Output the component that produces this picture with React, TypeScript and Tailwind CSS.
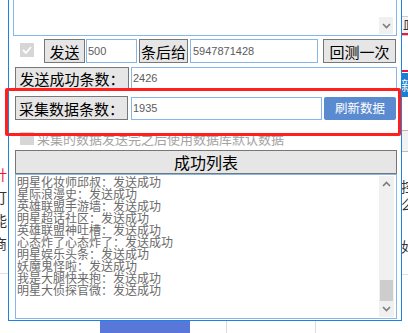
const cjk = "font-['Noto_Sans_CJK_SC','Noto_Sans_CJK_JP',sans-serif]";

const listItems = [
  "明星化妆师邱叔：发送成功",
  "星际浪漫史：发送成功",
  "英雄联盟手游墙：发送成功",
  "明星超话社区：发送成功",
  "英雄联盟神吐槽：发送成功",
  "心态炸了心态炸了：发送成功",
  "明星娱乐头条：发送成功",
  "妖魔鬼怪啦：发送成功",
  "我是大腿快来抱：发送成功",
  "明星大侦探官微：发送成功",
];

function Chevron({ up }: { up?: boolean }) {
  return (
    <svg width="9" height="6" viewBox="0 0 9 6">
      <polyline
        points={up ? "1,5 4.5,1.5 8,5" : "1,1 4.5,4.5 8,1"}
        fill="none"
        stroke="#7c7c7c"
        strokeWidth="1.6"
      />
    </svg>
  );
}

function WinButton({ label, className }: { label: string; className?: string }) {
  return (
    <div
      className={`flex items-center justify-center border border-[#777] bg-[#e6e6e6] text-[15px] leading-none text-black ${cjk} ${className ?? ""}`}
    >
      {label}
    </div>
  );
}

function Field({ value, className }: { value: string; className?: string }) {
  return (
    <div
      className={`flex items-center border border-[#86b7e8] bg-white pl-[1px] font-['Liberation_Sans',Arial,sans-serif] text-[11px] text-[#5c5c5c] ${className ?? ""}`}
    >
      {value}
    </div>
  );
}

export default function App() {
  return (
    <div className="relative h-[333px] w-[408px] overflow-hidden bg-white">
      {/* page behind the window */}
      <div className={`absolute left-[-7px] top-[167px] flex flex-col gap-[8px] text-[14px] leading-[15px] ${cjk}`}>
        <span className="text-[#e8193c]">针</span>
        <span className="text-[#333]">订</span>
        <span className="text-[#333]">能</span>
        <span className="text-[#333]">商</span>
      </div>
      <div className="absolute left-0 top-[273px] h-px w-[10px] bg-[#e2e2e2]" />
      <div className="absolute left-[401px] top-[16px] flex h-[20px] w-[12px] flex-col border border-[#ccc] bg-[#f4f4f4]">
        <span className={`pl-[1px] text-[12px] leading-[16px] text-[#333] ${cjk}`}>皿</span>
        <div className="h-[2px] bg-[#e8193c]" />
      </div>
      <div className="absolute left-[401px] top-[70px] h-[2px] w-[8px] bg-[#e8193c]" />
      <div className={`absolute left-[401px] top-[73px] flex h-[24px] w-[10px] items-center bg-[#1c7ed6] text-[13px] text-white ${cjk}`}>
        新
      </div>
      <div className="absolute left-[401px] top-[130px] h-[22px] w-[10px] border border-[#bbb] bg-[#f2f2f2]" />
      <div className={`absolute left-[401px] top-[177px] flex flex-col text-[14px] leading-[18px] text-[#333] ${cjk}`}>
        <span>控</span>
        <span>么</span>
        <span className="mt-[24px]">如</span>
      </div>
      <div className="absolute left-[401px] top-[274px] h-px w-[8px] bg-[#e2e2e2]" />
      <div className="absolute left-0 top-[321px] flex h-[12px] w-[408px]">
        <div className="ml-[100px] w-[90px] bg-[#5977d9]" />
        <div className="ml-[36px] w-px bg-[#dcdcdc]" />
        <div className="ml-[88px] w-px bg-[#dcdcdc]" />
      </div>

      {/* window */}
      <div className={`relative ml-[8px] flex h-[321px] w-[394px] flex-col border-x border-b border-[#1a84e0] bg-white px-[4px] ${cjk}`}>
        {/* top text area */}
        <div className="flex h-[36px] items-end justify-end border-x border-b border-[#86b7e8] pb-[1px] pr-[3px]">
          <div className="flex h-[17px] w-[14px] items-center justify-center bg-[#f0f0f0]">
            <Chevron />
          </div>
        </div>

        {/* send row */}
        <div className="mt-[3px] flex h-[24px] items-stretch">
          <div className="ml-[7px] mt-[4px] flex h-[14px] w-[14px] items-center justify-center bg-[#d6d6d6]">
            <svg width="10" height="8" viewBox="0 0 10 8">
              <polyline points="1,4 4,7 9,1" fill="none" stroke="#fff" strokeWidth="1.8" />
            </svg>
          </div>
          <WinButton label="发送" className="ml-[10px] w-[41px]" />
          <Field value="500" className="ml-px w-[51px]" />
          <WinButton label="条后给" className="ml-[2px] w-[49px]" />
          <Field value="5947871428" className="ml-[2px] w-[128px] pl-[2px]" />
          <WinButton label="回测一次" className="ml-[5px] w-[73px]" />
        </div>

        {/* success count */}
        <div className="ml-[2px] mt-[4px] flex h-[23px]">
          <WinButton label="发送成功条数：" className="w-[114px]" />
          <Field value="2426" className="ml-[2px] flex-1" />
        </div>

        {/* collected count */}
        <div className="ml-[2px] mt-[6px] flex h-[24px] items-start">
          <WinButton label="采集数据条数：" className="h-[24px] w-[113px]" />
          <Field value="1935" className="ml-[3px] mt-px h-[23px] w-[191px]" />
          <div className="ml-[2px] mt-px flex h-[23px] w-[72px] items-center justify-center rounded-[2px] bg-[#5a8bd0] text-[12.5px] text-white">
            刷新数据
          </div>
        </div>

        {/* disabled option */}
        <div className="ml-[7px] mt-[11px] flex h-[15px] items-center gap-[3px]">
          <div className="h-[13px] w-[14px] bg-[#d6d6d6]" />
          <span className="text-[13px] leading-none text-[#a3a3a3]">采集的数据发送完之后使用数据库默认数据</span>
        </div>

        {/* success list */}
        <WinButton label="成功列表" className="ml-[2px] mt-[4px] h-[24px] text-[16px]" />
        <div className="ml-[2px] flex h-[145px] border border-[#86b7e8]">
          <div className="flex flex-1 flex-col pl-[1px] pt-[1px] text-[12px] leading-[12px] text-[#6a6a6a]">
            {listItems.map((t) => (
              <span key={t} className="whitespace-nowrap">{t}</span>
            ))}
          </div>
          <div className="my-px mr-[2px] flex w-[15px] flex-col bg-[#f0f0f0]">
            <div className="flex h-[16px] items-center justify-center">
              <Chevron up />
            </div>
            <div className="flex-1" />
            <div className="mx-px h-[21px] bg-[#cdcdcd]" />
            <div className="flex h-[16px] items-center justify-center">
              <Chevron />
            </div>
          </div>
        </div>
      </div>

      {/* annotation */}
      <div className="absolute left-[5px] top-[88px] h-[48px] w-[396px] rounded-[2px] border-[3px] border-[#fe1f1f]" />
    </div>
  );
}
